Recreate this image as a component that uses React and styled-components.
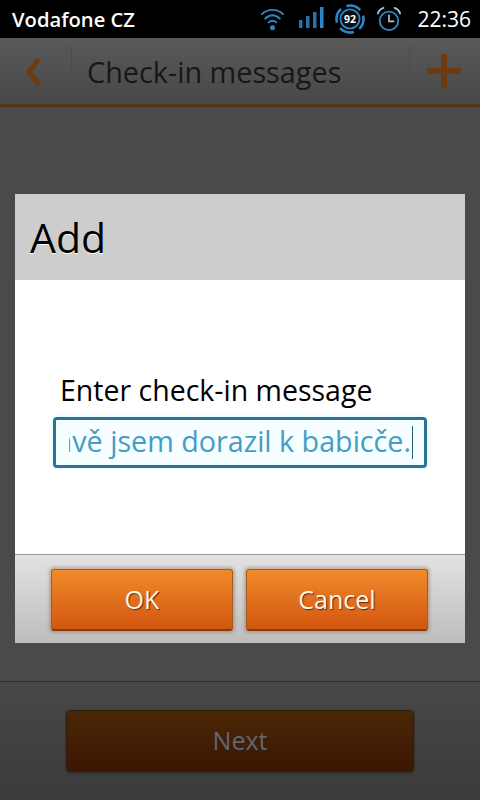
import React from 'react'
import styled, { createGlobalStyle } from 'styled-components'

const GlobalStyle = createGlobalStyle`
    html, body {
        margin: 0;
        padding: 0;
        background: #4a4a4a;
    }
    * {
        box-sizing: border-box;
    }
`;

export default function App() {
    return (
        <Screen>
            <GlobalStyle />
            <StatusBar>
                <Carrier>Vodafone CZ</Carrier>
                <StatusIcons>
                    <svg width="25" height="30" viewBox="0 0 26 30" fill="none" stroke="#2f86c4" strokeWidth="2" strokeLinecap="round">
                        <path d="M2 10 C8 4 18 4 24 10" />
                        <path d="M5.5 14.5 C10 10 16 10 20.5 14.5" />
                        <path d="M9 18.5 C11.5 16.3 14.5 16.3 17 18.5" />
                        <circle cx="13" cy="24" r="2.6" fill="#2f86c4" stroke="none" />
                    </svg>
                    <SignalIcon width="26" height="24" viewBox="0 0 26 24" fill="#2a6fa8">
                        <rect x="1" y="13" width="3.5" height="8" />
                        <rect x="8" y="9" width="3.5" height="12" />
                        <rect x="15" y="5" width="3.5" height="16" />
                        <rect x="22" y="0" width="3.5" height="21" fill="#2f86c4" />
                    </SignalIcon>
                    <BatteryIcon width="32" height="36" viewBox="0 0 32 36" fill="none">
                        <circle cx="16" cy="18" r="9.5" stroke="#2f86c4" strokeWidth="2" />
                        <circle cx="16" cy="18" r="13.5" stroke="#2f86c4" strokeWidth="2.6" strokeDasharray="15 6.2" strokeDashoffset="4" />
                        <circle cx="16" cy="18" r="8.4" fill="#0c0c0c" />
                        <BatteryText x="16" y="21.5" textAnchor="middle">92</BatteryText>
                    </BatteryIcon>
                    <AlarmIcon width="26" height="28" viewBox="0 0 28 30" fill="none" strokeLinecap="round">
                        <path d="M2 9 C3 6 5 4 8 3" stroke="#a9c4d8" strokeWidth="2" />
                        <path d="M26 9 C25 6 23 4 20 3" stroke="#a9c4d8" strokeWidth="2" />
                        <circle cx="14" cy="17" r="10" stroke="#2f86c4" strokeWidth="2" />
                        <path d="M14 11 V17.5 H19" stroke="#a9c4d8" strokeWidth="1.8" />
                    </AlarmIcon>
                </StatusIcons>
                <Clock>22:36</Clock>
            </StatusBar>

            <ActionBar>
                <BackCell>
                    <svg width="20" height="32" viewBox="0 0 20 32" fill="none" stroke="#6e3a10" strokeWidth="5">
                        <path d="M15 3 L5 16 L15 29" />
                    </svg>
                </BackCell>
                <Title>Check-in messages</Title>
                <AddCell>
                    <svg width="34" height="34" viewBox="0 0 34 34" fill="#6e3a10">
                        <rect x="0" y="14" width="34" height="6" />
                        <rect x="14" y="0" width="6" height="34" />
                    </svg>
                </AddCell>
            </ActionBar>

            <Body />

            <BottomBar>
                <NextButton>Next</NextButton>
            </BottomBar>

            <Overlay>
                <Dialog>
                    <DialogHead>Add</DialogHead>
                    <DialogBody>
                        <FieldLabel>Enter check-in message</FieldLabel>
                        <Field>
                            <FieldClip>
                                <FieldText>Právě jsem dorazil k babicče.</FieldText>
                                <Caret />
                            </FieldClip>
                        </Field>
                    </DialogBody>
                    <DialogFoot>
                        <OrangeButton>OK</OrangeButton>
                        <OrangeButton>Cancel</OrangeButton>
                    </DialogFoot>
                </Dialog>
            </Overlay>
        </Screen>
    )
}

const Screen = styled.div`
    position: relative;
    width: 480px;
    height: 800px;
    display: flex;
    flex-direction: column;
    overflow: hidden;
    background: #4a4a4a;
    font-family: "Open Sans", "Noto Sans", sans-serif;
`;

const StatusBar = styled.div`
    height: 38px;
    background: #000;
    display: flex;
    align-items: center;
    color: #fff;
    padding: 0 9px 0 12px;
`;

const Carrier = styled.span`
    font-size: 20.2px;
    font-weight: 600;
    margin-right: auto;
`;

const StatusIcons = styled.div`
    display: flex;
    align-items: center;
    gap: 10px;
    margin-right: 15px;
`;

const SignalIcon = styled.svg`
    margin-left: 3px;
`;

const BatteryIcon = styled.svg`
    margin-left: 0;
`;

const AlarmIcon = styled.svg`
    margin-left: 0;
`;

const BatteryText = styled.text`
    font-family: "Open Sans", sans-serif;
    font-size: 10.5px;
    font-weight: 700;
    fill: #fff;
`;

const Clock = styled.span`
    font-size: 21px;
    font-weight: 400;
`;

const ActionBar = styled.div`
    height: 69px;
    display: flex;
    align-items: stretch;
    background: linear-gradient(#595959, #484848);
    border-bottom: 3px solid #543313;
    box-shadow: 0 1px 0 #3e3e3e;
`;

const BackCell = styled.div`
    width: 72px;
    margin: 8px 0 6px;
    padding-right: 4px;
    display: flex;
    align-items: center;
    justify-content: center;
    border-right: 1px solid #4c4c4c;
`;

const Title = styled.div`
    flex: 1;
    padding-left: 15px;
    display: flex;
    align-items: center;
    font-size: 28.8px;
    color: #171717;
`;

const AddCell = styled.div`
    width: 71px;
    margin: 8px 0 6px;
    padding: 0 2px 3px 0;
    display: flex;
    align-items: center;
    justify-content: center;
    border-left: 1px solid #4c4c4c;
`;

const Body = styled.div`
    flex: 1;
    background: #4a4a4a;
`;

const BottomBar = styled.div`
    height: 119px;
    padding-top: 28px;
    display: flex;
    justify-content: center;
    align-items: flex-start;
    border-top: 1px solid #333;
    background: linear-gradient(#484848, #3b3b3b);
`;

const NextButton = styled.div`
    width: 348px;
    height: 62px;
    padding-bottom: 2px;
    border-radius: 4px;
    display: flex;
    align-items: center;
    justify-content: center;
    background: linear-gradient(#4a2706, #3d1603);
    border: 1px solid #2e1c0c;
    box-shadow: 0 1px 3px #2a2a2a;
    font-size: 25px;
    color: #666;
    text-shadow: 1px 1px 1px #222;
`;

const Overlay = styled.div`
    position: absolute;
    left: 15px;
    top: 194px;
`;

const Dialog = styled.div`
    width: 450px;
    height: 449px;
    display: flex;
    flex-direction: column;
    background: #fff;
`;

const DialogHead = styled.div`
    height: 86px;
    background: #cdcdcd;
    color: #000;
    display: flex;
    align-items: center;
    padding-left: 15px;
    font-size: 41px;
    text-shadow: 0 1px 0 #fff;
`;

const DialogBody = styled.div`
    flex: 1;
    display: flex;
    flex-direction: column;
    padding: 92px 38px 0;
    background: #fff;
`;

const FieldLabel = styled.div`
    font-size: 28.5px;
    line-height: 36px;
    color: #000;
    padding-left: 7px;
`;

const Field = styled.div`
    height: 51px;
    margin-top: 9px;
    border: 3px solid #2a7396;
    border-radius: 4px;
    background: #f6feff;
    box-shadow: 0 0 4px #cdf6fb;
    padding: 0 11px 0 13px;
    display: flex;
    align-items: center;
`;

const FieldClip = styled.div`
    flex: 1;
    height: 100%;
    overflow: hidden;
    display: flex;
    align-items: center;
    justify-content: flex-end;
`;

const FieldText = styled.span`
    flex: none;
    white-space: nowrap;
    font-size: 28.7px;
    line-height: 40px;
    padding-bottom: 3px;
    color: #439dc6;
`;

const Caret = styled.span`
    flex: none;
    width: 1px;
    height: 33px;
    background: #2a5f7a;
    margin-left: 1px;
`;

const DialogFoot = styled.div`
    height: 89px;
    padding: 14px 36px 11px;
    display: flex;
    gap: 13px;
    border-top: 1px solid #999;
    background: linear-gradient(#e2e2e2, #bdbdbd);
`;

const OrangeButton = styled.div`
    width: 182px;
    height: 62px;
    padding-bottom: 2px;
    border-radius: 3px;
    display: flex;
    align-items: center;
    justify-content: center;
    background: linear-gradient(#f08a2c, #d2560f);
    border: 1px solid #a55a22;
    border-bottom: 2px solid #7e3f18;
    box-shadow: 0 0 3px 2px rgba(150, 110, 80, 0.45);
    font-size: 25px;
    color: #fff4e6;
    text-shadow: 1px 1px 1px #5e2c0c;
`;
